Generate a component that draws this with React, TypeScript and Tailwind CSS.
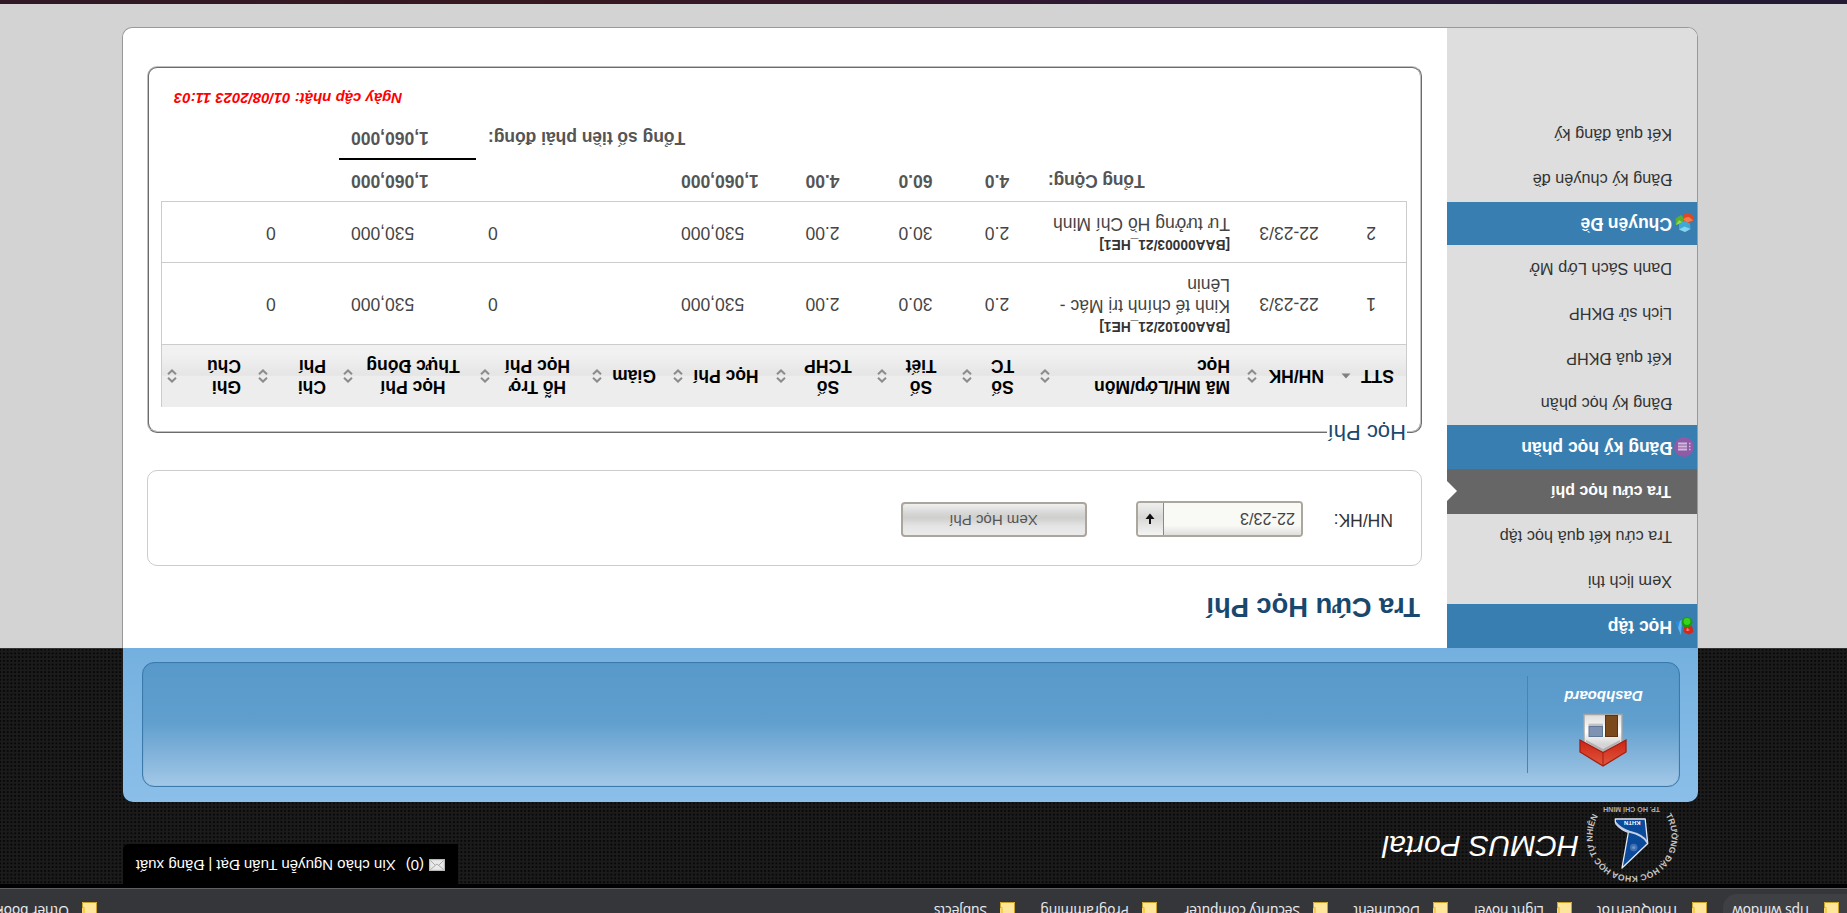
import React from "react";

const bookmarks = [
  { label: "Tips window", w: "w-[102px]" },
  { label: "ThoiQuenTot", w: "w-[107px]" },
  { label: "Light novel", w: "w-[96px]" },
  { label: "Document", w: "w-[92px]" },
  { label: "Security computer", w: "w-[143px]" },
  { label: "Programming", w: "w-[114px]" },
  { label: "Subjects", w: "w-[80px]" },
];

function Folder() {
  return (
    <svg className="mr-[13px] block shrink-0" width="15" height="11" viewBox="0 0 15 11">
      <rect x="0" y="0" width="15" height="11" fill="#ffe69a" />
      <path d="M0.5 0V10.5H14.5V5H12.5V0" fill="none" stroke="#c9a227" />
      <rect x="12" y="0" width="2.5" height="5" fill="#f3cd55" />
    </svg>
  );
}

function BookmarkBar() {
  return (
    <div className="flex h-[24px] shrink-0 items-start bg-[#35363a] text-[13.8px] text-[#e8eaed] [font-family:'Noto_Sans',sans-serif]">
      <div className="flex h-[19px] w-[124px] rounded-br-[14px] bg-[#3f4044] pl-2">
        <Folder />
        <BookmarkText>{bookmarks[0].label}</BookmarkText>
      </div>
      <div className="flex pl-4">
        {bookmarks.slice(1).map((b) => (
          <div key={b.label} className="flex">
            <Folder />
            <div className={b.w}>
              <BookmarkText>{b.label}</BookmarkText>
            </div>
          </div>
        ))}
      </div>
      <div className="ml-auto flex h-full w-[110px] items-start">
        <div className="mr-[13px] h-[12px] w-px bg-[#77787b]" />
        <Folder />
        <BookmarkText>Other bookmarks</BookmarkText>
      </div>
    </div>
  );
}

function BookmarkText({ children }: { children: React.ReactNode }) {
  return <div className="-mt-[7px] whitespace-nowrap leading-[18px] tracking-[-0.15px]">{children}</div>;
}

function SchoolLogo() {
  return (
    <svg className="block shrink-0" width="94" height="78" viewBox="168 30 94 78">
      <defs>
        <path id="ring" d="M181.5 97.5 A39.5 39.5 0 1 1 248.5 97.5" />
      </defs>
      <text fill="#c4c4c4" fontFamily="Liberation Sans, sans-serif" fontSize="8.6" fontWeight="bold">
        <textPath href="#ring" textLength="167">
          TRƯỜNG ĐẠI HỌC KHOA HỌC TỰ NHIÊN
        </textPath>
      </text>
      <text x="187" y="106" fill="#b0b0b0" fontFamily="Liberation Sans, sans-serif" fontSize="7.4" fontWeight="bold" textLength="57" lengthAdjust="spacingAndGlyphs">
        TP. HỒ CHÍ MINH
      </text>
      <path d="M225 45 L199.3 69.5 L201.8 94 H231.7 V91 C229 86 224.5 82.5 218.7 80.5 Z" fill="#0b4a9b" stroke="#e4e9f2" strokeWidth="1.3" strokeLinejoin="round" />
      <path d="M199.6 70.5 C203 77 210 79.5 217.5 81.3 C223 82.8 228 86 231.4 90" fill="none" stroke="#c3d0e6" strokeWidth="2.2" />
      <circle cx="213.3" cy="65.5" r="3.8" fill="#3f70b4" />
      <circle cx="213.3" cy="65.5" r="1.6" fill="#6f95c9" />
      <text x="206.5" y="91.6" fill="#fff" fontFamily="Liberation Sans, sans-serif" fontSize="5.6" fontWeight="bold" textLength="16.5" lengthAdjust="spacingAndGlyphs">
        KHTN
      </text>
    </svg>
  );
}

function Envelope() {
  return (
    <svg className="block" width="16" height="12" viewBox="0 0 16 12">
      <rect width="16" height="12" fill="#b9b9b9" />
      <rect x="1.2" y="1.2" width="13.6" height="9.6" fill="#e9e9e9" />
      <path d="M1.5 1.5L8 7L14.5 1.5M1.5 10.5L6 6M14.5 10.5L10 6" fill="none" stroke="#aaa" />
    </svg>
  );
}

function House() {
  return (
    <svg className="block" width="48" height="54" viewBox="0 0 48 54">
      <defs>
        <linearGradient id="wall" x1="0" y1="0" x2="0" y2="1">
          <stop offset="0.3" stopColor="#d5d5d5" />
          <stop offset="0.6" stopColor="#fff" />
          <stop offset="1" stopColor="#dcdcdc" />
        </linearGradient>
        <linearGradient id="roof" x1="0" y1="0" x2="0" y2="1">
          <stop offset="0" stopColor="#e0573f" />
          <stop offset="1" stopColor="#cc2412" />
        </linearGradient>
      </defs>
      <path d="M5 21 L24 10 L43 21 V52.5 H5 Z" fill="url(#wall)" stroke="#a5a5a5" strokeWidth="1.4" />
      <path d="M7 25 L24 15 L41 25 L41 27 L24 18 L7 27Z" fill="#999" opacity="0.6" />
      <rect x="9.5" y="30.5" width="12" height="21" fill="#7a4a1d" stroke="#5a3410" />
      <rect x="24.5" y="30.5" width="13.5" height="10" fill="#7d93b1" stroke="#5f7696" />
      <rect x="24" y="41" width="14.5" height="2.4" fill="#c2c2c2" />
      <path d="M24 1 L47 15 V27 L24 14.5 L1 27 V15 Z" fill="url(#roof)" stroke="#a51d10" strokeWidth="1.3" />
      <path d="M24 1.5V14" stroke="#a51d10" />
    </svg>
  );
}

function ShapesIcon() {
  return (
    <svg width="19" height="20" viewBox="0 0 19 20">
      <path d="M13 1 L19 14 L12 16Z" fill="#2a8be0" />
      <path d="M13 1 L16 8 L14 15 L12 16Z" fill="#63b5f2" />
      <path d="M0.5 4 L5 1.5 L10.5 4 L9.5 11 L2 10Z" fill="#d8261b" />
      <circle cx="7" cy="13.7" r="5.4" fill="#1c9a12" />
      <circle cx="7" cy="14.5" r="3.4" fill="#39d41c" />
      <path d="M4.5 6H8M6.3 5V8" stroke="#f3a49a" strokeWidth="0.8" />
    </svg>
  );
}

function ListIcon() {
  return (
    <svg width="20" height="20" viewBox="0 0 20 20">
      <circle cx="10" cy="10" r="10" fill="#8e5ba6" />
      <path d="M7 7.5H16M7 10.5H16M7 13.5H16" stroke="#d3b9de" strokeWidth="1.8" />
      <path d="M3.5 7.5H5M3.5 10.5H5M3.5 13.5H5" stroke="#d3b9de" strokeWidth="1.6" />
    </svg>
  );
}

function CubesIcon() {
  return (
    <svg width="19" height="20" viewBox="0 0 19 20">
      <path d="M0.8 12.5 L7 8.5 L12 11 L10.5 18.5 L6 20 L0.8 17.5Z" fill="#e2481f" />
      <path d="M0.8 12.5 L7 10.5 L11 13.5 L8.5 15.5 L5 16Z" fill="#f47b4b" />
      <path d="M11 10.5 L18.2 8 L18.5 14.5 L13 18 L10.5 15.5Z" fill="#58b02e" />
      <path d="M11.5 10.5 L18.2 8 L15 13Z" fill="#96dc4a" />
      <path d="M3.5 4 L9 1 L15 3.5 L15 9 L10 12 L4 9.5Z" fill="#3fa9d3" />
      <path d="M3.5 4 L9 1 L15 3.5 L9.5 6.5Z" fill="#86d3ee" />
    </svg>
  );
}

function GroupTitle({ icon, h, children }: { icon: React.ReactNode; h: string; children: React.ReactNode }) {
  return (
    <div className={"flex items-center bg-[#387eb0] text-[17.5px] font-bold text-white " + h}>
      <div className="flex w-[25px] justify-center">{icon}</div>
      <div className="pb-px">{children}</div>
    </div>
  );
}

function SideItem({ children, raised }: { children: React.ReactNode; raised?: boolean }) {
  return (
    <div className={"flex h-[45px] items-center pl-[25px] text-[16.3px] text-[#333] " + (raised ? "pb-[2px]" : "")}>
      {children}
    </div>
  );
}

function Sidebar() {
  return (
    <div className="w-[250px] shrink-0 rounded-bl-[9px] bg-[#dedede]">
      <GroupTitle h="h-[44px]" icon={<ShapesIcon />}>Học tập</GroupTitle>
      <SideItem>Xem lịch thi</SideItem>
      <SideItem>Tra cứu kết quả học tập</SideItem>
      <div className="flex h-[45px] items-center justify-between bg-[#666] pl-[26px] text-[16px] font-bold text-white">
        <span>Tra cứu học phí</span>
        <svg width="10" height="20" viewBox="0 0 10 20">
          <path d="M10 0V20L0 10Z" fill="#fff" />
        </svg>
      </div>
      <GroupTitle h="h-[44px]" icon={<ListIcon />}>Đăng ký học phần</GroupTitle>
      <SideItem raised>Đăng ký học phần</SideItem>
      <SideItem raised>Kết quả ĐKHP</SideItem>
      <SideItem raised>Lịch sử ĐKHP</SideItem>
      <SideItem raised>Danh Sách Lớp Mở</SideItem>
      <GroupTitle h="h-[43px]" icon={<CubesIcon />}>Chuyên Đề</GroupTitle>
      <SideItem>Đăng ký chuyên đề</SideItem>
      <SideItem>Kết quả đăng ký</SideItem>
    </div>
  );
}

function SortIcon({ active }: { active?: boolean }) {
  return active ? (
    <svg className="shrink-0" width="10" height="14" viewBox="0 0 10 14">
      <path d="M0.5 9.5L5 4.5L9.5 9.5Z" fill="#808080" />
    </svg>
  ) : (
    <svg className="shrink-0" width="10" height="14" viewBox="0 0 10 14">
      <path d="M1 5.3L5 1.5L9 5.3M1 8.7L5 12.5L9 8.7" fill="none" stroke="#8c8c8c" strokeWidth="2" />
    </svg>
  );
}

const heads: { lines: string[]; left?: boolean; active?: boolean }[] = [
  { lines: ["STT"], left: true, active: true },
  { lines: ["NH/HK"], left: true },
  { lines: ["Mã MH/Lớp/Môn", "Học"], left: true },
  { lines: ["Số", "TC"] },
  { lines: ["Số", "Tiết"] },
  { lines: ["Số", "TCHP"] },
  { lines: ["Học Phí"] },
  { lines: ["Giảm"] },
  { lines: ["Hỗ Trợ", "Học Phí"] },
  { lines: ["Học Phí", "Thực Đóng"] },
  { lines: ["Chi", "Phí"], left: true },
  { lines: ["Ghi", "Chú"], left: true },
];

const grid =
  "grid grid-cols-[70px_94px_207px_78px_85px_101px_103px_81px_112px_137px_85px_91px]";

const rows = [
  { n: "1", code: "[BAA00102/21_HE1]", name: "Kinh tế chính trị Mác - Lênin", h: "h-[82px]" },
  { n: "2", code: "[BAA00003/21_HE1]", name: "Tư tưởng Hồ Chí Minh", h: "h-[60px]" },
];

function FeeTable() {
  return (
    <div className="w-[1246px] text-[17.5px] leading-[21px]">
      <div className={grid + " h-[62px] border-x border-[#ccc] bg-[linear-gradient(#ededed_0%,#ededed_50%,#e5e5e5_51%,#f1f1f1_85%)] font-bold text-black"}>
        {heads.map((h, i) => (
          <div key={i} className="flex items-center pr-[5px] pl-[12px]">
            <div className={"grow whitespace-nowrap pr-[10px] " + (h.left ? "text-left" : "text-center")}>
              {h.lines.map((l) => (
                <div key={l}>{l}</div>
              ))}
            </div>
            <SortIcon active={h.active} />
          </div>
        ))}
      </div>
      <div className="border border-[#ccc] text-[#444]">
        {rows.map((r, i) => (
          <div key={r.n} className={grid + " items-center pb-[1px] " + r.h + (i === 0 ? " border-b border-[#ccc]" : "")}>
            <div className="text-center">{r.n}</div>
            <div className="text-center">22-23/3</div>
            <div className="px-[12px] pb-[2px]">
              <div className="text-[13.75px] font-bold leading-[20px] text-[#333]">{r.code}</div>
              <div>{r.name}</div>
            </div>
            <div className="pr-[2px] text-center">2.0</div>
            <div className="pr-[2px] text-center">30.0</div>
            <div className="pr-[2px] text-center">2.00</div>
            <div className="pr-[13px] text-right">530,000</div>
            <div />
            <div className="pr-[13px] text-right">0</div>
            <div className="pr-[13px] text-right">530,000</div>
            <div className="pr-[13px] text-right">0</div>
            <div />
          </div>
        ))}
      </div>
      <div className={grid + " h-[43px] font-bold text-[#555]"}>
        <div className="col-span-3 flex items-center justify-end pr-[12px] pb-[2px] tracking-[-0.15px]">Tổng Cộng:</div>
        <div className="flex items-center justify-center pb-[2px]">4.0</div>
        <div className="flex items-center justify-center pb-[2px]">60.0</div>
        <div className="flex items-center justify-center pb-[2px]">4.00</div>
        <div className="flex items-center justify-end pr-[12px] pb-[2px]">1,060,000</div>
        <div className="col-span-2" />
        <div className="flex items-center justify-end border-b-2 border-black pr-[12px]">1,060,000</div>
      </div>
      <div className={grid + " h-[40px] items-center font-bold text-[#555]"}>
        <div className="col-span-9 pr-[12px] text-right tracking-[-0.05px]">Tổng số tiền phải đóng:</div>
        <div className="pr-[12px] text-right">1,060,000</div>
      </div>
      <div className="pt-[9px] pr-[13px] text-right text-[15px] font-bold italic text-[red]">
        Ngày cập nhật: 01/08/2023 11:03
      </div>
    </div>
  );
}

function MainPanel() {
  return (
    <div className="flex grow flex-col pl-[25px] text-[#333]">
      <h1 className="h-[82px] pt-[25px] pl-[2px] text-[27.3px] font-bold leading-[32px] tracking-[-0.03px] text-[#19486f]">Tra Cứu Học Phí</h1>
      <div className="flex h-[96px] w-[1275px] shrink-0 items-start rounded-[10px] border border-[#ccc] pt-[28px] pl-[28px]">
        <div className="w-[90px] pt-[6px] text-[17.5px] leading-[22px]">NH/HK:</div>
        <div className="flex h-[36px] w-[167px] overflow-hidden rounded-[4px] border-2 border-[#aca79c]">
          <div className="grow bg-[linear-gradient(#dfdfdd,#f9f9f6_30%,#f9f9f6)] pt-[5px] pl-[6px] text-[16.2px] leading-[22px] text-[#444]">22-23/3</div>
          <div className="flex w-[26px] items-center justify-center border-l border-[#8f887c] bg-[linear-gradient(#f4f4f4,#d8d8d6_55%,#efefef)]">
            <svg width="10" height="11" viewBox="0 0 10 11">
              <path d="M5 0V8" stroke="#111" strokeWidth="2" />
              <path d="M0.5 5H9.5L5 10.5Z" fill="#111" />
            </svg>
          </div>
        </div>
        <div className="ml-[49px] flex h-[35px] w-[186px] items-center justify-center rounded-[4px] border-2 border-[#aca59d] bg-[linear-gradient(#ebebeb,#e4e4e4_30%,#cfcfce_55%,#d6d6d5_70%,#f0f0f0)] pb-[1px] pl-[1px] text-[15px] text-[#555]">
          Xem Học Phí
        </div>
      </div>
      <fieldset className="mt-[24px] h-[380px] w-[1275px] rounded-[10px] border-2 border-[#c0c0c0] pl-[13px] [border-style:groove]">
        <legend className="px-[1px] text-[22px] leading-[28px] text-[#19486f]">Học Phí</legend>
        <div className="pt-[11px]">
          <FeeTable />
        </div>
      </fieldset>
    </div>
  );
}

export default function App() {
  return (
    <div className="flex h-[913px] w-[1847px] rotate-180 flex-col overflow-hidden bg-[#d3d3d3] [font-family:'Liberation_Sans',Arial,sans-serif]">
      <BookmarkBar />
      <div className="h-px shrink-0 bg-[#5f6063]" />
      <div className="flex h-[240px] shrink-0 flex-col border-t-4 border-b border-t-black border-b-[#333] bg-[#1b1b1b] bg-[radial-gradient(#080808_30%,transparent_40%)] bg-[length:3.75px_3.75px] px-[123px] pl-[149px]">
        <div className="flex h-[82px] shrink-0 items-start">
          <div className="ml-[19px] pt-[1px]">
            <SchoolLogo />
          </div>
          <div className="ml-[6px] pt-[20px] text-[30px] italic leading-[36px] text-white">HCMUS Portal</div>
          <div className="ml-auto flex h-[40px] w-[335px] items-center rounded-br-[5px] bg-black pb-[2px] pl-[13px] text-[15px] text-white">
            <Envelope />
            <span className="ml-[5px] whitespace-nowrap">(0)</span>
            <span className="ml-[10px] whitespace-nowrap">Xin chào Nguyễn Tuấn Đạt | Đăng xuất</span>
          </div>
        </div>
        <div className="-mb-px h-[154px] shrink-0 rounded-t-[10px] bg-[linear-gradient(#8bbfe9,#74b0df)] px-[18px] pt-[15px]">
          <div className="flex h-[125px] w-[1538px] items-start rounded-[12px] border border-[#3d7aac] bg-[linear-gradient(#a3c8e7,#7fb1d9_28%,#609fce_52%,#5799ca)] pt-[13px] shadow-[inset_0_0_1px_#3d7aac]">
            <div className="flex h-[97px] w-[152px] flex-col items-center border-r border-[#4385b8] pt-[6px]">
              <House />
              <div className="pt-[7px] text-[15px] font-bold italic leading-[20px] text-white">Dashboard</div>
            </div>
          </div>
        </div>
      </div>
      <div className="ml-[149px] flex h-[621px] w-[1576px] shrink-0 rounded-b-[10px] border border-t-0 border-[#999] bg-white">
        <Sidebar />
        <MainPanel />
      </div>
      <div className="mt-auto h-[4px] bg-[linear-gradient(90deg,#241a33,#2b1a3a_30%,#3a1720_70%,#2f1a26)]" />
    </div>
  );
}
